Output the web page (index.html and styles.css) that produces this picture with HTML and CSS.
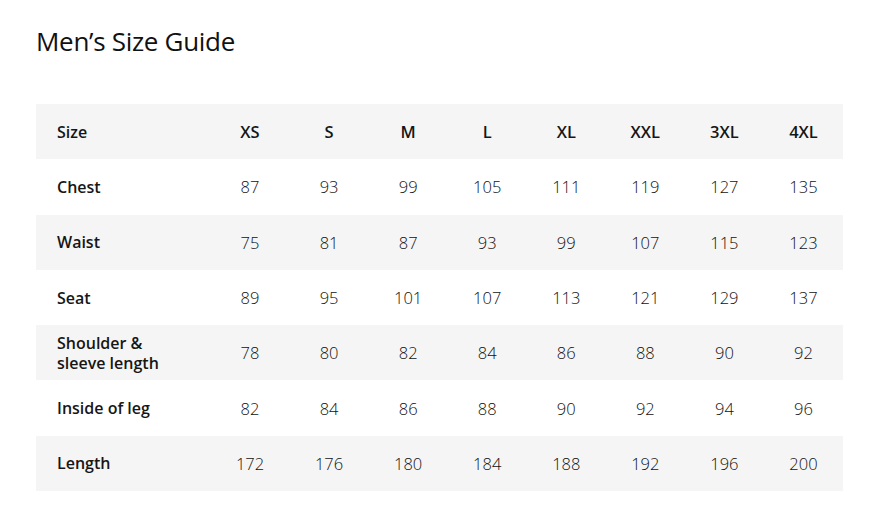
FILE: index.html
```html
<!DOCTYPE html>
<html lang="en">
<head>
<meta charset="utf-8">
<title>Men's Size Guide</title>
<link rel="stylesheet" href="styles.css">
</head>
<body>
<main class="page">
  <h1 class="title">Men’s Size Guide</h1>
  <table class="sizes">
    <thead>
      <tr><th class="label">Size</th><th>XS</th><th>S</th><th>M</th><th>L</th><th>XL</th><th>XXL</th><th>3XL</th><th>4XL</th></tr>
    </thead>
    <tbody>
      <tr><th class="label">Chest</th><td>87</td><td>93</td><td>99</td><td>105</td><td>111</td><td>119</td><td>127</td><td>135</td></tr>
      <tr><th class="label">Waist</th><td>75</td><td>81</td><td>87</td><td>93</td><td>99</td><td>107</td><td>115</td><td>123</td></tr>
      <tr><th class="label">Seat</th><td>89</td><td>95</td><td>101</td><td>107</td><td>113</td><td>121</td><td>129</td><td>137</td></tr>
      <tr><th class="label">Shoulder &amp;<br>sleeve length</th><td>78</td><td>80</td><td>82</td><td>84</td><td>86</td><td>88</td><td>90</td><td>92</td></tr>
      <tr><th class="label">Inside of leg</th><td>82</td><td>84</td><td>86</td><td>88</td><td>90</td><td>92</td><td>94</td><td>96</td></tr>
      <tr><th class="label">Length</th><td>172</td><td>176</td><td>180</td><td>184</td><td>188</td><td>192</td><td>196</td><td>200</td></tr>
    </tbody>
  </table>
</main>
</body>
</html>
```

FILE: styles.css
```css
html, body {
  margin: 0;
  padding: 0;
  background: #ffffff;
}
body {
  font-family: "Open Sans", "Liberation Sans", sans-serif;
  color: #1a1a1a;
}
.page {
  padding: 22px 27px 0 36px;
}
.title {
  margin: 0 0 44px 0;
  font-size: 26px;
  font-weight: 400;
  line-height: 38px;
  letter-spacing: -0.3px;
  color: #111;
}
.sizes {
  width: 807px;
  border-collapse: collapse;
  table-layout: fixed;
}
.sizes tr {
  height: 55.3px;
}
.sizes thead tr,
.sizes tbody tr:nth-child(even) {
  background: #f5f5f5;
}
.sizes th,
.sizes td {
  padding: 0;
  font-size: 16.5px;
  text-align: center;
  vertical-align: middle;
}
.sizes th {
  font-weight: 600;
  color: #161616;
}
.sizes td {
  font-weight: 300;
  color: #111;
}
.sizes th.label {
  width: 153.5px;
  padding-left: 21px;
  text-align: left;
  font-size: 16px;
  line-height: 20px;
}
```
